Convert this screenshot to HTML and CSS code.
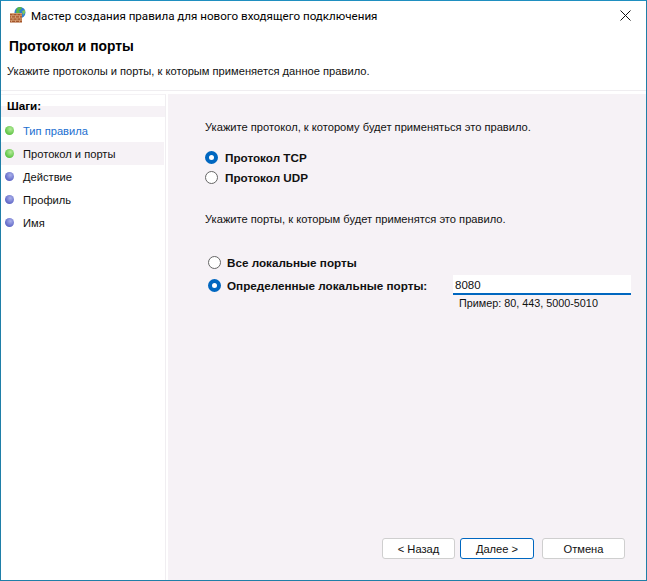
FILE: index.html
```html
<!DOCTYPE html>
<html lang="ru">
<head>
<meta charset="utf-8">
<title>Мастер создания правила</title>
<link rel="stylesheet" href="styles.css">
</head>
<body>
<div class="window">
  <div class="titlebar">
    <svg class="app-icon" width="20" height="20" viewBox="0 0 20 20">
      <circle cx="11" cy="8.500" r="5.500" fill="#2f7fd0"/>
      <path d="M8 4c1.500-1.300 3.500-1.300 5-0.500l-1 2-2 1 1 2-2 2-2-2z" fill="#58b548"/>
      <path d="M13 7l3-1 0 3-2 2z" fill="#7cc65c"/>
      <rect x="1" y="9.500" width="12" height="9" fill="#a5562b"/>
      <path d="M1 9.500h12M1 11.750h12M1 14h12M1 16.250h12M4 9.500v2.250M8 9.500v2.250M12 9.500v2.250M2.500 11.750V14M6.500 11.750V14M10.500 11.750V14M4 14v2.250M8 14v2.250M12 14v2.250M2.500 16.250v2.250M6.500 16.250v2.250M10.500 16.250v2.250" stroke="#dba67c" stroke-width="0.8" fill="none"/>
    </svg>
    <span class="title">Мастер создания правила для нового входящего подключения</span>
    <svg class="close" width="11" height="11" viewBox="0 0 11 11"><path d="M0.500 0.500l10 10M10.500 0.500l-10 10" stroke="#111" stroke-width="1" fill="none"/></svg>
  </div>
  <header class="header">
    <h1 class="heading">Протокол и порты</h1>
    <p class="subtitle">Укажите протоколы и порты, к которым применяется данное правило.</p>
  </header>
  <div class="main">
    <nav class="sidebar">
      <div class="steps-title">Шаги:</div>
      <ul class="steps">
        <li class="step done link"><span class="dot"></span>Тип правила</li>
        <li class="step done current"><span class="dot"></span>Протокол и порты</li>
        <li class="step"><span class="dot"></span>Действие</li>
        <li class="step"><span class="dot"></span>Профиль</li>
        <li class="step"><span class="dot"></span>Имя</li>
      </ul>
    </nav>
    <section class="content">
      <div class="form">
        <p class="prompt">Укажите протокол, к которому будет применяться это правило.</p>
        <div class="group protocols">
          <label class="option"><span class="radio checked"></span>Протокол TCP</label>
          <label class="option"><span class="radio"></span>Протокол UDP</label>
        </div>
        <p class="prompt second">Укажите порты, к которым будет применятся это правило.</p>
        <div class="group ports">
          <label class="option"><span class="radio"></span>Все локальные порты</label>
          <div class="port-row">
            <label class="option port-label"><span class="radio checked"></span>Определенные локальные порты:</label>
            <div class="port-field">
              <div class="input">8080</div>
              <div class="hint">Пример: 80, 443, 5000-5010</div>
            </div>
          </div>
        </div>
      </div>
      <div class="buttons">
        <button class="btn back">&lt; Назад</button>
        <button class="btn next">Далее &gt;</button>
        <button class="btn cancel">Отмена</button>
      </div>
    </section>
  </div>
</div>
</body>
</html>
```
FILE: styles.css
```css
* { box-sizing: border-box; }
html, body { margin: 0; padding: 0; background: #fff; }
body {
  width: 647px;
  height: 581px;
  overflow: hidden;
  font-family: "Liberation Sans", Arial, sans-serif;
  font-size: 11.15px;
  color: #111;
}
.window {
  width: 647px;
  height: 581px;
  border: 1px solid #1f7fa8;
  border-top-color: #1f8fc0;
  display: flex;
  flex-direction: column;
  background: #fff;
}
.titlebar {
  height: 29px;
  flex: none;
  display: flex;
  align-items: center;
  padding: 0 15px 0 8px;
}
.app-icon { flex: none; margin-right: 2px; margin-top: -3px; }
.title {
  flex: 1;
  font-family: Roboto, sans-serif;
  font-size: 11.6px;
  color: #000;
}
.close { flex: none; }
.header { height: 61px; flex: none; border-bottom: 1px solid #efedf0; }
.heading {
  margin: 9px 0 0 8px;
  font-family: "Liberation Sans", sans-serif;
  font-size: 13.8px;
  line-height: 16px;
  font-weight: 700;
  color: #000;
}
.subtitle { margin: 9px 0 0 6px; line-height: 14px; }
.main {
  flex: 1;
  display: flex;
  padding-top: 3px;
  min-height: 0;
}
.sidebar {
  width: 165px;
  flex: none;
  border-right: 1px solid #f0eef1;
  border-top: 1px solid #f4f2f5;
  margin-right: 2px;
}
.steps-title {
  height: 22px;
  padding: 4px 0 0 6px;
  font-weight: 700;
  font-size: 11.7px;
  line-height: 13px;
  color: #000;
  background: linear-gradient(#fff 0, #fff 11px, #f6f2f6 11px);
}
.steps {
  list-style: none;
  margin: 2px 0 0;
  padding: 0;
}
.step {
  height: 23px;
  display: flex;
  align-items: center;
  margin-right: 1px;
  padding-left: 4px;
}
.dot {
  width: 9px;
  height: 9px;
  border-radius: 50%;
  margin-right: 9px;
  background: radial-gradient(circle at 60% 35%, #aab0ea, #5a62c4 75%);
}
.done .dot { background: radial-gradient(circle at 60% 35%, #b5eb9a, #55c03c 75%); }
.link { color: #1c6fd0; }
.current { background: #f6f2f6; }
.content {
  flex: 1;
  background: #f6f2f6;
  display: flex;
  flex-direction: column;
  justify-content: space-between;
  min-width: 0;
}
.form { padding: 26px 15px 0 37px; }
.prompt { margin: 0; line-height: 14px; }
.second { margin-top: 27px; margin-bottom: 0; }
.group { display: flex; flex-direction: column; }
.protocols { margin-top: 15px; gap: 4px; }
.ports { margin-top: 28px; margin-left: 3px; gap: 7px; }
.option {
  height: 16px;
  display: flex;
  align-items: center;
  font-size: 11.7px;
  font-weight: 700;
  white-space: nowrap;
}
.radio {
  width: 13px;
  height: 13px;
  flex: none;
  border: 1px solid #666;
  border-radius: 50%;
  background: #fff;
  margin-right: 7px;
}
.radio.checked {
  border: 4px solid #0067c0;
  background: #fff;
}
.ports .radio { margin-right: 6px; }
.port-row { display: flex; align-items: flex-start; }
.port-label { width: 245px; flex: none; }
.port-field { width: 178px; flex: none; margin-top: -2px; }
.input {
  height: 20px;
  background: #fff;
  border-bottom: 2px solid #0067c0;
  padding: 3px 2px 0;
  font-size: 11.5px;
  line-height: 14px;
}
.hint { margin: 1px 0 0 6px; font-size: 10.8px; line-height: 14px; }
.buttons {
  display: flex;
  justify-content: flex-end;
  padding: 0 21px 21px 0;
  height: 42px;
  flex: none;
}
.btn {
  height: 21px;
  font: inherit;
  color: #111;
  background: #fff;
  border: 1px solid #cfcfcf;
  border-radius: 3px;
  padding: 1px 0 0;
  line-height: 17px;
}
.back { width: 73px; }
.next { width: 74px; margin-left: 5px; border-color: #0067c0; }
.cancel { width: 83px; margin-left: 8px; }
```
